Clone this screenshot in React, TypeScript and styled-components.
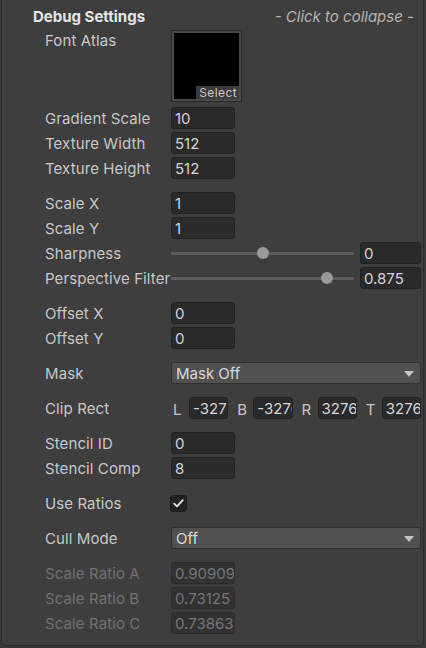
import React from "react";
import styled, { createGlobalStyle } from "styled-components";

const Global = createGlobalStyle`
  html, body { margin: 0; padding: 0; background: #383838; }
  body { font-family: Inter, "Noto Sans", sans-serif; -webkit-font-smoothing: antialiased; }
`;

const Panel = styled.div`
  box-sizing: border-box;
  width: 423px;
  height: 646px;
  margin-left: 1px;
  background: #3e3e3e;
  border: 1px solid #2b2b2b;
  border-top: none;
  border-radius: 0 0 5px 5px;
  display: flex;
  flex-direction: column;
  gap: 3px;
`;

const Header = styled.div`
  height: 27px;
  box-sizing: border-box;
  padding: 6px 9px 0 31px;
  display: flex;
  justify-content: space-between;
  line-height: 22px;
`;

const Title = styled.span`
  font-weight: 700;
  font-size: 15px;
  color: #e6e6e6;
`;

const Hint = styled.span`
  font-style: italic;
  font-size: 15px;
  color: #b4b4b4;
`;

const Label = styled.div<{ $disabled?: boolean }>`
  font-size: 15px;
  line-height: 22px;
  padding-top: 2px;
  letter-spacing: 0.1px;
  color: ${(p) => (p.$disabled ? "#727272" : "#c8c8c8")};
  white-space: nowrap;
  overflow: hidden;
`;

const Row = styled.div<{ $gap?: number; $tall?: number }>`
  display: grid;
  grid-template-columns: 126px 1fr;
  height: ${(p) => p.$tall ?? 22}px;
  margin-top: ${(p) => p.$gap ?? 0}px;
  padding: 0 2px 0 43px;
  align-items: ${(p) => (p.$tall ? "start" : "center")};
  & > ${Label} {
    padding-top: ${(p) => (p.$tall ? 0 : 2)}px;
  }
`;

const Field = styled.div<{ $w?: number; $disabled?: boolean }>`
  box-sizing: border-box;
  width: ${(p) => (p.$w ? `${p.$w}px` : "100%")};
  height: 22px;
  background: ${(p) => (p.$disabled ? "#323232" : "#2a2a2a")};
  border: 1px solid ${(p) => (p.$disabled ? "#2c2c2c" : "#222222")};
  border-radius: 3px;
  padding: 1px 3px 0;
  font-size: 15px;
  line-height: 20px;
  color: ${(p) => (p.$disabled ? "#767676" : "#d4d4d4")};
  white-space: nowrap;
  overflow: hidden;
`;

const Atlas = styled.div`
  box-sizing: border-box;
  width: 71px;
  height: 72px;
  background: #000;
  border: 1px solid #2a2a2a;
  box-shadow: inset 0 0 0 2px #494949;
  display: flex;
  align-items: flex-end;
  justify-content: flex-end;
  padding: 2px;
`;

const SelectTag = styled.div`
  background: #3c3c3c;
  color: #c8c8c8;
  font-size: 12px;
  line-height: 13px;
  padding: 0 2px 0 3px;
  letter-spacing: 0.4px;
`;

const SliderWrap = styled.div`
  display: grid;
  grid-template-columns: 1fr 61px;
  gap: 6px;
  align-items: center;
`;

const Track = styled.div`
  position: relative;
  height: 12px;
  &::before {
    content: "";
    position: absolute;
    left: 0;
    right: 0;
    top: 5px;
    height: 3px;
    background: #5d5d5d;
  }
`;

const Knob = styled.div`
  position: absolute;
  top: 0;
  width: 12px;
  height: 12px;
  margin-left: -6px;
  border-radius: 50%;
  background: #999999;
`;

const Dropdown = styled.div`
  box-sizing: border-box;
  height: 22px;
  background: #515151;
  border: 1px solid #2f2f2f;
  border-radius: 3px;
  padding: 1px 6px 0 4px;
  display: flex;
  align-items: center;
  justify-content: space-between;
  font-size: 15px;
  color: #d8d8d8;
`;

const Arrow = styled.div`
  width: 0;
  height: 0;
  border-left: 5px solid transparent;
  border-right: 5px solid transparent;
  border-top: 6px solid #c4c4c4;
`;

const ClipGrid = styled.div`
  display: grid;
  grid-template-columns: repeat(4, minmax(0, 1fr));
  gap: 7px;
`;

const ClipItem = styled.div`
  display: grid;
  grid-template-columns: 18px minmax(0, 1fr);
  align-items: center;
`;

const ClipLetter = styled.span`
  font-size: 15px;
  color: #c8c8c8;
  padding: 2px 0 0 2px;
`;

const Check = styled.div`
  box-sizing: border-box;
  width: 17px;
  height: 17px;
  margin-left: -1px;
  background: #222222;
  border: 1px solid #1c1c1c;
  border-radius: 3px;
  display: flex;
  align-items: center;
  justify-content: center;
`;

const Slider = ({ frac, value }: { frac: number; value: string }) => (
  <SliderWrap>
    <Track>
      <Knob style={{ left: `calc(6px + (100% - 12px) * ${frac})` }} />
    </Track>
    <Field>{value}</Field>
  </SliderWrap>
);

export default function App() {
  return (
    <>
      <Global />
      <Panel>
        <Header>
          <Title>Debug Settings</Title>
          <Hint>- Click to collapse -</Hint>
        </Header>
        <Row $tall={72}>
          <Label>Font Atlas</Label>
          <Atlas>
            <SelectTag>Select</SelectTag>
          </Atlas>
        </Row>
        <Row $gap={2}>
          <Label>Gradient Scale</Label>
          <Field $w={64}>10</Field>
        </Row>
        <Row>
          <Label>Texture Width</Label>
          <Field $w={64}>512</Field>
        </Row>
        <Row>
          <Label>Texture Height</Label>
          <Field $w={64}>512</Field>
        </Row>
        <Row $gap={10}>
          <Label>Scale X</Label>
          <Field $w={64}>1</Field>
        </Row>
        <Row>
          <Label>Scale Y</Label>
          <Field $w={64}>1</Field>
        </Row>
        <Row>
          <Label>Sharpness</Label>
          <Slider frac={0.5} value="0" />
        </Row>
        <Row>
          <Label>Perspective Filter</Label>
          <Slider frac={0.875} value="0.875" />
        </Row>
        <Row $gap={10}>
          <Label>Offset X</Label>
          <Field $w={64}>0</Field>
        </Row>
        <Row>
          <Label>Offset Y</Label>
          <Field $w={64}>0</Field>
        </Row>
        <Row $gap={10}>
          <Label>Mask</Label>
          <Dropdown>
            <span>Mask Off</span>
            <Arrow />
          </Dropdown>
        </Row>
        <Row $gap={10}>
          <Label>Clip Rect</Label>
          <ClipGrid>
            {[
              ["L", "-32767"],
              ["B", "-32767"],
              ["R", "32767"],
              ["T", "32767"],
            ].map(([l, v]) => (
              <ClipItem key={l}>
                <ClipLetter>{l}</ClipLetter>
                <Field>{v}</Field>
              </ClipItem>
            ))}
          </ClipGrid>
        </Row>
        <Row $gap={10}>
          <Label>Stencil ID</Label>
          <Field $w={64}>0</Field>
        </Row>
        <Row>
          <Label>Stencil Comp</Label>
          <Field $w={64}>8</Field>
        </Row>
        <Row $gap={10}>
          <Label>Use Ratios</Label>
          <Check>
            <svg width="11" height="9" viewBox="0 0 11 9">
              <path d="M1.2 4.6 L4 7.4 L9.8 1.2" fill="none" stroke="#e6e6e6" strokeWidth="1.8" strokeLinecap="round" strokeLinejoin="round" />
            </svg>
          </Check>
        </Row>
        <Row $gap={10}>
          <Label>Cull Mode</Label>
          <Dropdown>
            <span>Off</span>
            <Arrow />
          </Dropdown>
        </Row>
        <Row $gap={10}>
          <Label $disabled>Scale Ratio A</Label>
          <Field $w={64} $disabled>0.909091</Field>
        </Row>
        <Row>
          <Label $disabled>Scale Ratio B</Label>
          <Field $w={64} $disabled>0.73125</Field>
        </Row>
        <Row>
          <Label $disabled>Scale Ratio C</Label>
          <Field $w={64} $disabled>0.738636</Field>
        </Row>
      </Panel>
    </>
  );
}
